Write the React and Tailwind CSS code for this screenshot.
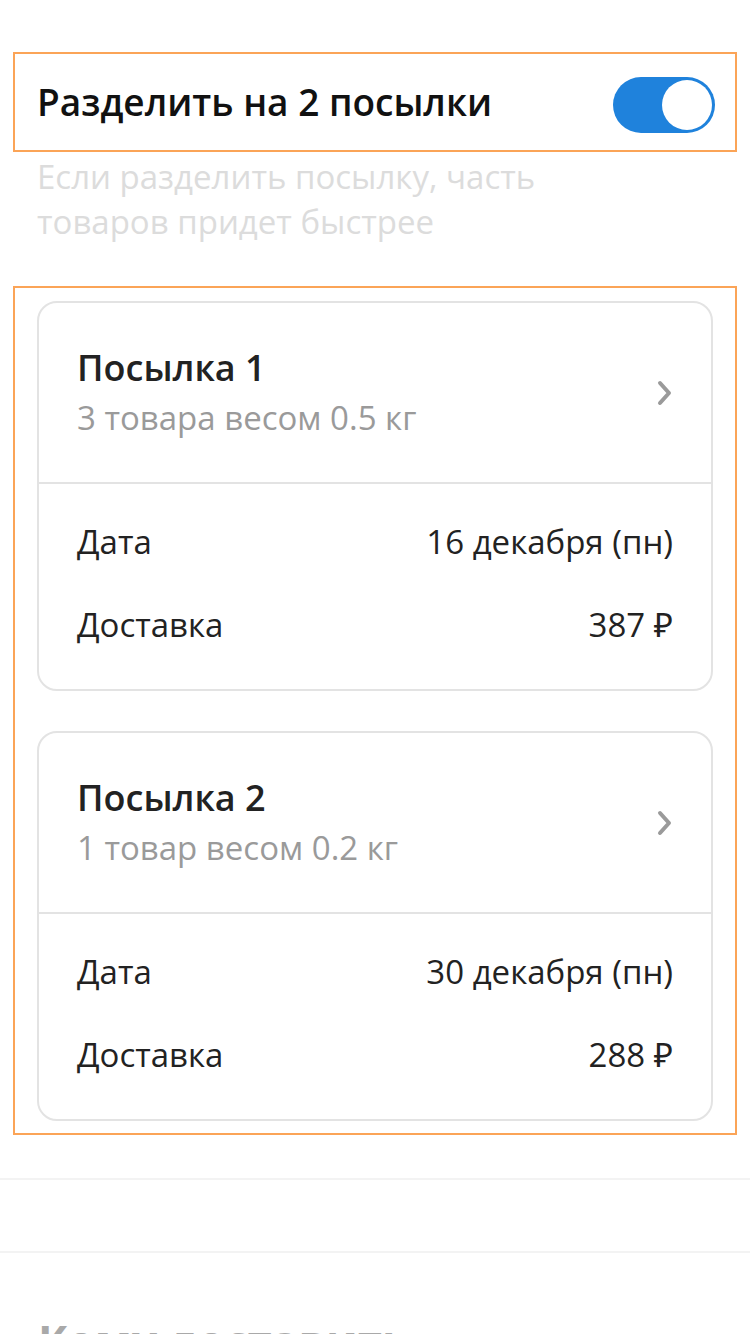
import React from "react";

const PARCELS = [
  { title: "Посылка 1", info: "3 товара весом 0.5 кг", date: "16 декабря (пн)", price: "387 ₽" },
  { title: "Посылка 2", info: "1 товар весом 0.2 кг", date: "30 декабря (пн)", price: "288 ₽" },
];

function Toggle() {
  return (
    <div className="mt-[6px] w-[102px] h-[56px] rounded-full bg-[#1f82dc] flex items-center justify-end pr-[3px]">
      <div className="w-[50px] h-[50px] rounded-full bg-white" />
    </div>
  );
}

function Chevron() {
  return (
    <svg width="16" height="26" viewBox="0 0 16 26" fill="none">
      <path d="M3 3l9 10-9 10" stroke="#9a9a9a" strokeWidth="4" strokeLinecap="round" strokeLinejoin="round" />
    </svg>
  );
}

function ParcelCard({ p }) {
  return (
    <div className="border-2 border-[#e3e3e3] rounded-[20px] bg-white">
      <div className="flex items-center justify-between pl-[38px] pr-[38px] pt-[43px] pb-[42px] border-b-2 border-[#e3e3e3]">
        <div className="flex flex-col gap-[6px]">
          <div className="text-[36px] leading-[44px] font-semibold text-[#222]">{p.title}</div>
          <div className="text-[33px] leading-[44px] text-[#9a9a9a]">{p.info}</div>
        </div>
        <Chevron />
      </div>
      <div className="flex flex-col gap-[39px] px-[38px] pt-[36px] pb-[42px] text-[33px] leading-[44px] text-[#222]">
        <div className="flex justify-between">
          <span>Дата</span>
          <span>{p.date}</span>
        </div>
        <div className="flex justify-between">
          <span>Доставка</span>
          <span>{p.price}</span>
        </div>
      </div>
    </div>
  );
}

export default function App() {
  return (
    <div className="w-[750px] h-[1334px] overflow-hidden bg-white pt-[52px]" style={{ fontFamily: "'Open Sans', 'Noto Sans', sans-serif" }}>
      <div className="mx-[13px] border-2 border-[#fba457] h-[100px] flex items-center justify-between pl-[22px] pr-[20px]">
        <span className="text-[37px] font-semibold text-[#111]">Разделить на 2 посылки</span>
        <Toggle />
      </div>
      <p className="mt-[2px] px-[37px] text-[33px] leading-[45px] text-[#dcdcdc]">
        Если разделить посылку, часть
        <br />
        товаров придет быстрее
      </p>

      <div className="mt-[42px] mx-[13px] border-2 border-[#fba457] pt-[13px] pb-[12px] px-[22px] flex flex-col gap-[40px]">
        {PARCELS.map((p) => (
          <ParcelCard key={p.title} p={p} />
        ))}
      </div>

      <div className="mt-[43px] border-t-2 border-[#f3f3f3] h-[73px]" />
      <div className="border-t-2 border-[#f3f3f3] px-[38px] pt-[58px]">
        <div className="text-[44px] font-bold text-[#a9a9a9] leading-[60px]">Кому доставить</div>
      </div>
    </div>
  );
}
